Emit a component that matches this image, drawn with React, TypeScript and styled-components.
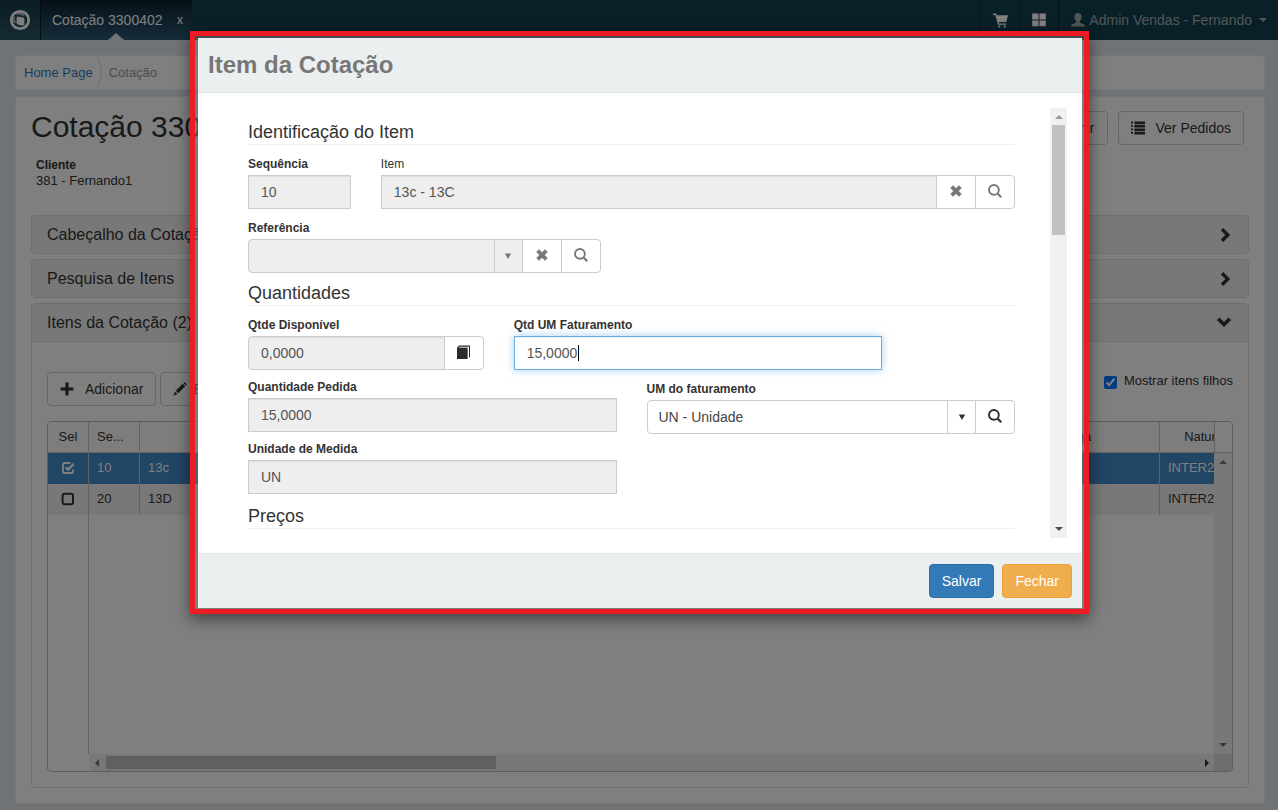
import React from "react";
import styled, { createGlobalStyle, css } from "styled-components";

const GlobalStyle = createGlobalStyle`
  * { box-sizing: border-box; }
  body {
    margin: 0;
    background: #dfe7ec;
    color: #333;
    font-family: "Liberation Sans", Arial, sans-serif;
    font-size: 14px;
    line-height: 20px;
  }
  button, input, select { font-family: inherit; font-size: 14px; }
  h1, h2, h3, dl, dd, ol { margin: 0; padding: 0; font-weight: normal; }
`;

/* ---------- icons ---------- */

const paths: Record<string, React.ReactNode> = {
  remove: (
    <path d="M4 1.6 7 4.6 10 1.6 12.4 4 9.4 7 12.4 10 10 12.4 7 9.4 4 12.4 1.6 10 4.6 7 1.6 4Z" strokeWidth="0.6" stroke="currentColor" strokeLinejoin="round" />
  ),
  search: (
    <>
      <circle cx="5.9" cy="5.9" r="4.9" fill="none" stroke="currentColor" strokeWidth="1.9" />
      <path d="M9 10.2 10.2 9 13.8 12.4 12.4 13.8Z" stroke="currentColor" strokeWidth="0.5" />
    </>
  ),
  book: (
    <>
      <path d="M0 3 2 0.6H13V12.6H12V1.8H2.6L2 2.8H10.4V14H0.6Q0 14 0 13.4Z" />
      <rect x="0" y="2.8" width="10.4" height="11.2" />
    </>
  ),
  plus: <path d="M5.4 .6H8.6V5.4H13.4V8.6H8.6V13.4H5.4V8.6H.6V5.4H5.4Z" />,
  pencil: (
    <path d="M10.4 1.1 11.1.4Q11.6 0 12.1.5L13.5 1.9Q14 2.4 13.5 2.9L12.8 3.6ZM9.7 1.8 12.2 4.3 5.2 11.3 2.7 8.8ZM2 9.6 4.4 12 0.3 13.7Z" />
  ),
  list: (
    <path d="M0 .6H2V2.6H0ZM3.4 .6H14V3.2H3.4ZM0 4H2V5.8H0ZM3.4 4H14V6.6H3.4ZM0 7.4H2V9.2H0ZM3.4 7.4H14V10H3.4ZM0 10.8H2V12.8H0ZM3.4 10.8H14V13.4H3.4Z" />
  ),
  right: <path d="M3.8 2.4 6.2 0 13.2 7 6.2 14 3.8 11.6 8.3 7Z" />,
  down: <path d="M0 4 2.5 1.6 7 6.1 11.5 1.6 14 4 7 10.9Z" />,
  cart: (
    <path d="M0 .4H2.6Q3 .4 3.2.9L3.6 2.2H14L12.4 8.4H5.3L5.6 9.7H12.4V11H4.7L2.1 1.8H0ZM5.1 11.6H6.9V13.6H5.1ZM10.1 11.6H11.9V13.6H10.1Z" />
  ),
  grid: <path d="M.2 .6H6.5V6.4H.2ZM7.5.6H13.8V6.4H7.5ZM.2 7.4H6.5V13.2H.2ZM7.5 7.4H13.8V13.2H7.5Z" />,
  user: (
    <path d="M7 0C9 0 10.6 1.4 10.6 3.8 10.6 5.8 9.6 7.4 8.8 8.1V9.3Q9.4 10 11.4 10.7 14 11.5 14 12.6V13.6H0V12.6Q0 11.5 2.6 10.7 4.6 10 5.2 9.3V8.1C4.4 7.4 3.4 5.8 3.4 3.8 3.4 1.4 5 0 7 0Z" />
  ),
  checked: (
    <>
      <path d="M9.5 2H3.6Q2 2 2 3.6V10.4Q2 12 3.6 12H10.4Q12 12 12 10.4V8.4" fill="none" stroke="currentColor" strokeWidth="1.8" />
      <path d="M4.6 6.2 7 8.6 12.8 2.8" fill="none" stroke="currentColor" strokeWidth="2.4" />
    </>
  ),
  unchecked: <rect x="1.6" y="1.8" width="10.4" height="10.4" rx="2" fill="none" stroke="currentColor" strokeWidth="2" />,
  caret: <path d="M3 5H11L7 9Z" />,
  select: <path d="M3.8 4.4H10.2L7 10Z" />,
  up: <path d="M3 9H11L7 5Z" />,
  left: <path d="M9 3V11L5 7Z" />,
  next: <path d="M5 3V11L9 7Z" />,
};

const Svg = styled.svg`
  display: block;
  flex: none;
  fill: currentColor;
`;

const Icon = ({ name, size = 14 }: { name: string; size?: number }) => (
  <Svg width={size} height={size} viewBox="0 0 14 14" aria-hidden="true">
    {paths[name]}
  </Svg>
);

const Logo = () => (
  <Svg width={22} height={22} viewBox="0 0 22 22" aria-hidden="true">
    <circle cx="11" cy="11" r="8.7" fill="none" stroke="currentColor" strokeWidth="2.8" />
    <path d="M7.6 7.6 13.6 8.2Q15.4 8.6 15.4 10.4V16.6L10 16Q7.6 15.4 7.6 13.2Z" />
    <path d="M3.6 12.6Q5 14 7.6 14.2V12.4L6 11.8V6.4Q3.8 8 3.6 12.6Z" opacity="0.6" />
    <path d="M8 3.2Q13 2.6 15.6 6L15 8 13.6 6.4 7 5.6Z" opacity="0.6" />
  </Svg>
);

/* ---------- page ---------- */

const Page = styled.div`
  min-height: 100vh;
  display: flex;
  flex-direction: column;
`;

const Navbar = styled.nav`
  height: 40px;
  display: flex;
  background: #144050;
`;

const NavBrand = styled.a`
  width: 41px;
  display: flex;
  align-items: center;
  justify-content: center;
  color: #fff;
  background: linear-gradient(#16394a, #2a5668);
  border-right: 1px solid #0a1c26;
`;

const NavTab = styled.div`
  position: relative;
  width: 151px;
  padding: 0 9px 0 11px;
  display: flex;
  align-items: center;
  justify-content: space-between;
  color: #fff;
  background: linear-gradient(#0c2230, #2b5a74);
  &::after {
    content: "";
    position: absolute;
    left: 67px;
    bottom: 0;
    border: 8px solid transparent;
    border-top: 0;
    border-bottom: 7px solid #dfe7ec;
  }
`;

const TabClose = styled.button`
  border: 0;
  padding: 0;
  background: none;
  color: #fff;
  font-size: 12px;
`;

const NavRight = styled.div`
  margin-left: auto;
  display: flex;
`;

const NavButton = styled.button<{ $wide?: boolean }>`
  min-width: 39px;
  border: 0;
  border-left: 1px solid #0a2430;
  padding: ${(p) => (p.$wide ? "0 8px 0 12px" : "0")};
  display: flex;
  align-items: center;
  justify-content: center;
  gap: 4px;
  background: none;
  color: ${(p) => (p.$wide ? "#a4acb0" : "#fff")};
`;

const Content = styled.main`
  flex: 1;
  display: flex;
  flex-direction: column;
  gap: 6px;
  padding: 15px 13px 6px 15px;
`;

const Breadcrumb = styled.ol`
  height: 35px;
  padding: 0 8px;
  display: flex;
  align-items: center;
  list-style: none;
  font-size: 13px;
  color: #999;
  background: #fff;
  border: 1px solid #eef0f1;
  border-radius: 4px;
  a { color: #337ab7; text-decoration: none; }
  li { display: flex; align-items: center; }
`;

const Crumb = styled.svg`
  margin: 0 7px 0 4px;
`;

const Card = styled.section`
  flex: 1;
  display: flex;
  flex-direction: column;
  padding: 14px 15px 15px;
  background: #fff;
  border: 1px solid #eef0f1;
  border-radius: 4px;
`;

const CardHeader = styled.header`
  display: flex;
  justify-content: space-between;
  padding-right: 5px;
`;

const PageTitle = styled.h1`
  font-size: 30px;
  line-height: 32px;
`;

const ButtonRow = styled.div<{ $gap: number }>`
  display: flex;
  gap: ${(p) => p.$gap}px;
`;

const Button = styled.button<{ $tight?: boolean }>`
  height: 34px;
  padding: 0 12px;
  display: flex;
  align-items: center;
  gap: ${(p) => (p.$tight ? 6 : 11)}px;
  color: #333;
  background: #fff;
  border: 1px solid #ccc;
  border-radius: 4px;
`;

const Client = styled.dl`
  margin: 13px 0 27px;
  padding-left: 5px;
  font-size: 12px;
  line-height: 15px;
  dt { font-weight: bold; }
  dd { font-size: 13px; }
`;

const Panel = styled.section<{ $grow?: boolean }>`
  border: 1px solid #ddd;
  border-radius: 4px;
  margin-bottom: ${(p) => (p.$grow ? 0 : 5)}px;
  ${(p) => p.$grow && css`flex: 1; display: flex; flex-direction: column;`}
`;

const PanelHeader = styled.button<{ $open?: boolean }>`
  width: 100%;
  height: ${(p) => (p.$open ? 38 : 37)}px;
  padding: 0 17px 0 15px;
  display: flex;
  align-items: center;
  justify-content: space-between;
  font-size: 16px;
  color: #333;
  background: #f0f0f0;
  border: 0;
  border-bottom: ${(p) => (p.$open ? "1px solid #ddd" : "0")};
`;

const PanelBody = styled.div`
  flex: 1;
  display: flex;
  flex-direction: column;
  gap: 15px;
  padding: 30px 15px 15px;
`;

const Toolbar = styled.div`
  display: flex;
  justify-content: space-between;
`;

const CheckLabel = styled.label`
  height: 18px;
  display: flex;
  align-items: center;
  gap: 7px;
  font-size: 13px;
  input { width: 13px; height: 13px; margin: 3px 0 0; }
`;

/* ---------- items grid ---------- */

const GridFrame = styled.div`
  flex: 1;
  display: grid;
  grid-template-columns: minmax(0, 1fr) 18px;
  grid-template-rows: minmax(0, 1fr) 17px;
  border: 1px solid #bbb;
  border-radius: 4px;
  overflow: hidden;
`;

const GridViewport = styled.div`
  display: flex;
  flex-direction: column;
  overflow: hidden;
`;

const ItemsTable = styled.table`
  width: calc(100% + 48px);
  flex: none;
  table-layout: fixed;
  border-collapse: separate;
  border-spacing: 0;
  font-size: 13px;
  line-height: 20px;
  th, td { border-right: 1px solid #c4c4c4; padding: 5px 8px; text-align: left; font-weight: normal; white-space: nowrap; height: 31px; }
  th { text-align: center; border-bottom: 1px solid #c4c4c4; background: #fbfbfb; }
  td { padding: 4px 8px 6px; }
  th:nth-child(2) { text-align: left; }
`;

const ItemRow = styled.tr<{ $selected?: boolean }>`
  color: ${(p) => (p.$selected ? "#fff" : "#333")};
  background: ${(p) => (p.$selected ? "#428bca" : "#f1f1f1")};
`;

const CheckCell = styled.span`
  display: flex;
  justify-content: center;
`;

const PinnedColumn = styled.div`
  flex: 1;
  width: 41px;
  border-right: 1px solid #c4c4c4;
`;

const VerticalBar = styled.div`
  width: 17px;
  display: flex;
  flex-direction: column;
  align-items: center;
  justify-content: space-between;
  padding: 2px 0;
  background: #f1f1f1;
  color: #505050;
`;

const GridSide = styled.div`
  display: flex;
  flex-direction: column;
`;

const HeaderCap = styled.div`
  height: 31px;
  border-left: 1px solid #c4c4c4;
  border-bottom: 1px solid #c4c4c4;
`;

const GridBar = styled(VerticalBar)`
  flex: 1;
  width: 100%;
  color: #777;
`;

const HorizontalBar = styled.div`
  margin-left: 42px;
  display: flex;
  align-items: center;
  gap: 2px;
  background: #f1f1f1;
  color: #777;
  svg:last-child { margin-left: auto; color: #333; }
`;

const HorizontalThumb = styled.div`
  width: calc(35% - 3px);
  height: 13px;
  background: #c1c1c1;
`;

const BarCorner = styled.div`
  background: #dcdcdc;
`;

/* ---------- modal ---------- */

const Backdrop = styled.div`
  position: fixed;
  inset: 0;
  padding: 31px 0 0 1px;
  display: flex;
  align-items: flex-start;
  justify-content: center;
  background: rgba(0, 0, 0, 0.5);
`;

const Highlight = styled.div`
  width: 899px;
  max-width: 100%;
  padding: 2px 2px 1px 3px;
  border: 5px solid #ed1c24;
  background: rgba(128, 122, 122, 0.5);
  box-shadow: 0 5px 15px rgba(0, 0, 0, 0.5);
`;

const Dialog = styled.div`
  background: #fff;
`;

const DialogHeader = styled.header`
  height: 55px;
  padding: 0 10px;
  display: flex;
  align-items: center;
  background: #ebeff0;
  border-bottom: 1px solid #dfe2e3;
`;

const DialogTitle = styled.h2`
  font-size: 24px;
  line-height: 30px;
  font-weight: bold;
  color: #777;
`;

const DialogBody = styled.div`
  display: flex;
  justify-content: space-between;
  padding: 15px;
`;

const Form = styled.form`
  flex: 1;
  padding: 12px 35px 0;
  display: flex;
  flex-direction: column;
  gap: 8px;
`;

const Scrollbar = styled(VerticalBar)`
  height: 430px;
  justify-content: flex-start;
  svg:first-child { color: #999; }
  svg:last-child { margin-top: auto; }
`;

const Thumb = styled.div`
  width: 13px;
  height: 110px;
  margin-top: 1px;
  background: #c1c1c1;
`;

const Section = styled.section`
  display: flex;
  flex-direction: column;
  gap: 9px;
`;

const Legend = styled.h3`
  font-size: 18px;
  line-height: 24px;
  border-bottom: 1px solid #eee;
`;

const FieldGrid = styled.div<{ $gap: number }>`
  display: grid;
  grid-template-columns: repeat(12, minmax(0, 1fr));
  gap: ${(p) => p.$gap}px 30px;
`;

const FieldStack = styled.div`
  grid-column: span 6;
  display: flex;
  flex-direction: column;
  gap: 7px;
  padding-bottom: 2px;
`;

const FieldBox = styled.div<{ $span: number; $inset?: boolean; $low?: boolean }>`
  grid-column: span ${(p) => p.$span};
  display: flex;
  flex-direction: column;
  gap: 1px;
  padding-right: ${(p) => (p.$inset ? 16 : 0)}px;
  padding-top: ${(p) => (p.$low ? 2 : 0)}px;
`;

const Label = styled.label<{ $light?: boolean }>`
  font-size: 12px;
  line-height: 20px;
  font-weight: ${(p) => (p.$light ? "normal" : "bold")};
`;

const InputGroup = styled.div`
  position: relative;
  display: flex;
`;

const control = css`
  height: 34px;
  min-width: 0;
  flex: 1;
  border: 1px solid #ccc;
  outline: 0;
`;

const Input = styled.input<{ $round?: boolean; $focus?: boolean }>`
  ${control}
  padding: 0 12px;
  color: #555;
  background: #fff;
  border-radius: ${(p) => (p.$round ? "4px 0 0 4px" : "0")};
  box-shadow: inset 0 1px 1px rgba(0, 0, 0, 0.075);
  &:read-only { background: #eee; }
  ${(p) => p.$focus && css`
    border-color: #66afe9;
    box-shadow: inset 0 1px 1px rgba(0, 0, 0, 0.075), 0 0 8px rgba(102, 175, 233, 0.6);
    caret-color: transparent;
  `}
`;

const TextCursor = styled.span`
  position: absolute;
  left: 64px;
  top: 9px;
  width: 1px;
  height: 16px;
  background: #000;
`;

const SelectBox = styled.div`
  position: relative;
  flex: 1;
  display: flex;
`;

const Select = styled.select`
  ${control}
  appearance: none;
  padding: 0 40px 0 11px;
  color: #444;
  background: #fff;
  border-radius: 4px 0 0 4px;
  opacity: 1;
  &:disabled { background: #eee; }
`;

const SelectArrow = styled.span<{ $muted?: boolean }>`
  position: absolute;
  top: 1px;
  right: 1px;
  bottom: 1px;
  width: 28px;
  display: flex;
  align-items: center;
  justify-content: center;
  border-left: 1px solid #ccc;
  color: ${(p) => (p.$muted ? "#777" : "#333")};
  pointer-events: none;
`;

const AddonButton = styled.button<{ $muted?: boolean }>`
  width: 40px;
  height: 34px;
  margin-left: -1px;
  padding: 0 0 2px;
  display: flex;
  align-items: center;
  justify-content: center;
  color: ${(p) => (p.$muted ? "#777" : "#2b2b2b")};
  background: #fff;
  border: 1px solid #ccc;
  &:last-child { border-radius: 0 4px 4px 0; }
`;

const DialogFooter = styled.footer`
  height: 55px;
  padding: 0 10px;
  display: flex;
  align-items: center;
  justify-content: flex-end;
  gap: 8px;
  background: #ebeff0;
  border-top: 1px solid #e0e3e4;
`;

const ActionButton = styled.button<{ $tone: "primary" | "warning" }>`
  height: 34px;
  padding: 0 12px;
  color: #fff;
  border-radius: 4px;
  border: 1px solid ${(p) => (p.$tone === "primary" ? "#2e6da4" : "#eea236")};
  background: ${(p) => (p.$tone === "primary" ? "#337ab7" : "#f0ad4e")};
`;

interface FieldProps {
  id: string;
  label: string;
  span: number;
  light?: boolean;
  inset?: boolean;
  low?: boolean;
  children: React.ReactNode;
}

const Field = ({ id, label, span, light, inset, low, children }: FieldProps) => (
  <FieldBox $span={span} $inset={inset} $low={low}>
    <Label htmlFor={id} $light={light}>{label}</Label>
    <InputGroup>{children}</InputGroup>
  </FieldBox>
);

const items = [
  { seq: "10", item: "13c", nature: "INTER2", selected: true },
  { seq: "20", item: "13D", nature: "INTER2", selected: false },
];

export default function App() {
  return (
    <>
      <GlobalStyle />
      <Page>
        <Navbar>
          <NavBrand href="#" aria-label="Início"><Logo /></NavBrand>
          <NavTab>
            <span>Cotação 3300402</span>
            <TabClose type="button">x</TabClose>
          </NavTab>
          <NavRight>
            <NavButton type="button" aria-label="Carrinho"><Icon name="cart" size={15} /></NavButton>
            <NavButton type="button" aria-label="Aplicativos"><Icon name="grid" /></NavButton>
            <NavButton type="button" $wide>
              <Icon name="user" />
              Admin Vendas - Fernando
              <Icon name="caret" />
            </NavButton>
          </NavRight>
        </Navbar>

        <Content>
          <Breadcrumb>
            <li><a href="#">Home Page</a></li>
            <li>
              <Crumb width="5" height="33" viewBox="0 0 5 33" fill="none" stroke="#ddd" aria-hidden="true">
                <path d="M0.5 1Q8 16.5 0.5 32" />
              </Crumb>
              Cotação
            </li>
          </Breadcrumb>

          <Card>
            <CardHeader>
              <PageTitle>Cotação 3300402</PageTitle>
              <ButtonRow $gap={10}>
                <Button type="button"><Icon name="list" />Imprimir</Button>
                <Button type="button"><Icon name="list" />Ver Pedidos</Button>
              </ButtonRow>
            </CardHeader>
            <Client>
              <dt>Cliente</dt>
              <dd>381 - Fernando1</dd>
            </Client>

            <Panel><PanelHeader type="button">Cabeçalho da Cotação<Icon name="right" /></PanelHeader></Panel>
            <Panel><PanelHeader type="button">Pesquisa de Itens<Icon name="right" /></PanelHeader></Panel>
            <Panel $grow>
              <PanelHeader type="button" $open>Itens da Cotação (2)<Icon name="down" /></PanelHeader>
              <PanelBody>
                <Toolbar>
                  <ButtonRow $gap={4}>
                    <Button type="button"><Icon name="plus" />Adicionar</Button>
                    <Button type="button" $tight><Icon name="pencil" />Editar</Button>
                  </ButtonRow>
                  <CheckLabel><input type="checkbox" defaultChecked />Mostrar itens filhos</CheckLabel>
                </Toolbar>
                <GridFrame>
                  <GridViewport>
                    <ItemsTable>
                      <colgroup>
                        <col width="41" />
                        <col width="51" />
                        <col />
                        <col width="213" />
                        <col width="102" />
                      </colgroup>
                      <thead>
                        <tr><th>Sel</th><th>Se...</th><th>Item</th><th>Data Entrega</th><th>Natureza</th></tr>
                      </thead>
                      <tbody>
                        {items.map((row) => (
                          <ItemRow key={row.seq} $selected={row.selected}>
                            <td><CheckCell><Icon name={row.selected ? "checked" : "unchecked"} /></CheckCell></td>
                            <td>{row.seq}</td>
                            <td>{row.item}</td>
                            <td />
                            <td>{row.nature}</td>
                          </ItemRow>
                        ))}
                      </tbody>
                    </ItemsTable>
                    <PinnedColumn />
                  </GridViewport>
                  <GridSide>
                    <HeaderCap />
                    <GridBar><Icon name="up" /><Icon name="caret" /></GridBar>
                  </GridSide>
                  <HorizontalBar><Icon name="left" /><HorizontalThumb /><Icon name="next" /></HorizontalBar>
                  <BarCorner />
                </GridFrame>
              </PanelBody>
            </Panel>
          </Card>
        </Content>
      </Page>

      <Backdrop>
        <Highlight>
          <Dialog role="dialog" aria-modal="true" aria-labelledby="dialog-title">
            <DialogHeader><DialogTitle id="dialog-title">Item da Cotação</DialogTitle></DialogHeader>
            <DialogBody>
              <Form>
                <Section>
                  <Legend>Identificação do Item</Legend>
                  <FieldGrid $gap={9}>
                    <Field id="seq" label="Sequência" span={2}><Input id="seq" readOnly defaultValue="10" /></Field>
                    <Field id="item" label="Item" span={10} light>
                      <Input id="item" readOnly defaultValue="13c - 13C" />
                      <AddonButton type="button" $muted aria-label="Limpar item"><Icon name="remove" /></AddonButton>
                      <AddonButton type="button" $muted aria-label="Buscar item"><Icon name="search" /></AddonButton>
                    </Field>
                    <Field id="ref" label="Referência" span={6} inset>
                      <SelectBox>
                        <Select id="ref" disabled />
                        <SelectArrow $muted><Icon name="select" /></SelectArrow>
                      </SelectBox>
                      <AddonButton type="button" $muted aria-label="Limpar referência"><Icon name="remove" /></AddonButton>
                      <AddonButton type="button" $muted aria-label="Buscar referência"><Icon name="search" /></AddonButton>
                    </Field>
                  </FieldGrid>
                </Section>

                <Section>
                  <Legend>Quantidades</Legend>
                  <FieldGrid $gap={7}>
                    <Field id="disp" label="Qtde Disponível" span={4}>
                      <Input id="disp" $round readOnly defaultValue="0,0000" />
                      <AddonButton type="button" aria-label="Ver estoque"><Icon name="book" /></AddonButton>
                    </Field>
                    <Field id="fat" label="Qtd UM Faturamento" span={6}>
                      <Input id="fat" $focus defaultValue="15,0000" />
                      <TextCursor />
                    </Field>
                    <FieldStack>
                      <Field id="ped" label="Quantidade Pedida" span={6}><Input id="ped" readOnly defaultValue="15,0000" /></Field>
                      <Field id="um" label="Unidade de Medida" span={6}><Input id="um" readOnly defaultValue="UN" /></Field>
                    </FieldStack>
                    <Field id="umfat" label="UM do faturamento" span={6} low>
                      <SelectBox>
                        <Select id="umfat" defaultValue="un"><option value="un">UN - Unidade</option></Select>
                        <SelectArrow><Icon name="select" /></SelectArrow>
                      </SelectBox>
                      <AddonButton type="button" aria-label="Buscar unidade"><Icon name="search" /></AddonButton>
                    </Field>
                  </FieldGrid>
                </Section>

                <Section><Legend>Preços</Legend></Section>
              </Form>
              <Scrollbar><Icon name="up" /><Thumb /><Icon name="caret" /></Scrollbar>
            </DialogBody>
            <DialogFooter>
              <ActionButton type="button" $tone="primary">Salvar</ActionButton>
              <ActionButton type="button" $tone="warning">Fechar</ActionButton>
            </DialogFooter>
          </Dialog>
        </Highlight>
      </Backdrop>
    </>
  );
}
